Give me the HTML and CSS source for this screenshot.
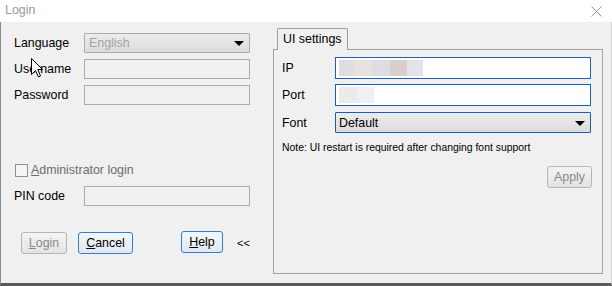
FILE: index.html
```html
<!DOCTYPE html>
<html>
<head>
<meta charset="utf-8">
<link rel="stylesheet" href="styles.css">
</head>
<body>
<div class="window">
  <div class="titlebar">
    <span class="title">Login</span>
    <svg class="close" width="11" height="11" viewBox="0 0 11 11"><path d="M0.5 0.5 L10.5 10.5 M10.5 0.5 L0.5 10.5" stroke="#9a9a9a" stroke-width="1" fill="none"/></svg>
  </div>
  <div class="client">
    <div class="left">
      <div class="row">
        <span class="label">Language</span>
        <div class="combo disabled"><span>English</span><span class="arrow"></span></div>
      </div>
      <div class="row">
        <span class="label">Username</span>
        <div class="input disabled"></div>
      </div>
      <div class="row">
        <span class="label">Password</span>
        <div class="input disabled"></div>
      </div>
      <div class="check-row">
        <span class="checkbox"></span>
        <span class="check-label"><u>A</u>dministrator login</span>
      </div>
      <div class="row">
        <span class="label">PIN code</span>
        <div class="input disabled"></div>
      </div>
      <div class="buttons">
        <button class="btn btn-login" disabled><u>L</u>ogin</button>
        <button class="btn btn-cancel focus"><u>C</u>ancel</button>
        <button class="btn btn-help focus"><u>H</u>elp</button>
        <span class="collapse">&lt;&lt;</span>
      </div>
    </div>
    <div class="right">
      <div class="tab">UI settings</div>
      <div class="panel">
        <div class="prow">
          <span class="plabel">IP</span>
          <div class="input active">
            <span class="blur" style="width:15px;background:#dcdce3"></span><span class="blur" style="width:18px;background:#e8e2dc"></span><span class="blur" style="width:18px;background:#dcdce4"></span><span class="blur" style="width:17px;background:#dccdcd"></span><span class="blur" style="width:16px;background:#e1e5e9"></span>
          </div>
        </div>
        <div class="prow">
          <span class="plabel">Port</span>
          <div class="input active">
            <span class="blur" style="width:18px;background:#ecebe7"></span><span class="blur" style="width:17px;background:#eef0f5"></span>
          </div>
        </div>
        <div class="prow font-row">
          <span class="plabel">Font</span>
          <div class="combo active"><span>Default</span><span class="arrow"></span></div>
        </div>
        <div class="note">Note: UI restart is required after changing font support</div>
        <div class="apply-row">
          <button class="btn btn-apply" disabled>Apply</button>
        </div>
      </div>
    </div>
    <svg class="cursor" width="13" height="20" viewBox="0 0 13 20"><path d="M0.5 0.5 L0.5 16.5 L4.5 12.5 L7.5 19 L9.5 18 L6.8 11.5 L11.5 11.5 Z" fill="#fff" stroke="#000" stroke-width="1" stroke-linejoin="miter"/></svg>
  </div>
</div>
</body>
</html>
```

FILE: styles.css
```css
* { box-sizing: border-box; }
html, body { margin: 0; padding: 0; }
body {
  width: 612px;
  height: 286px;
  overflow: hidden;
  font-family: "Liberation Sans", Arial, sans-serif;
  font-size: 12.4px;
  color: #000;
}
.window {
  width: 612px;
  height: 286px;
  display: flex;
  flex-direction: column;
  background: #f0f0f0;
}
.titlebar {
  height: 22px;
  background: #fff;
  display: flex;
  align-items: center;
  justify-content: space-between;
  padding: 0 10px 2px 5px;
}
.title {
  color: #9a9a9a;
  font-size: 12.4px;
}
.close { margin-top: 2px; }
.client {
  position: relative;
  flex: 1;
  display: flex;
  background: #f0f0f0;
  border-left: 1px solid #8c8c8c;
  border-right: 1px solid #d4d4d4;
  border-bottom: 3px solid #5a5a5a;
}
.left {
  width: 272px;
  padding: 11px 0 0 13px;
  display: flex;
  flex-direction: column;
}
.row {
  display: flex;
  align-items: center;
  height: 20px;
  margin-bottom: 6px;
}
.label {
  width: 70px;
  line-height: 20px;
}
.input {
  width: 166px;
  height: 20px;
  border: 1px solid #ababab;
  background: #f0f0f0;
}
.combo {
  width: 166px;
  height: 20px;
  border: 1px solid #acacac;
  border-radius: 1px;
  background: linear-gradient(#ececec, #dcdcdc);
  display: flex;
  align-items: center;
  justify-content: space-between;
  padding: 0 5px 0 4px;
}
.combo.disabled { color: #a3a3a3; }
.arrow {
  width: 0;
  height: 0;
  border-left: 5px solid transparent;
  border-right: 5px solid transparent;
  border-top: 5px solid #000;
  margin-top: 1px;
}
.check-row {
  display: flex;
  align-items: center;
  height: 14px;
  margin-top: 52px;
  margin-bottom: 9px;
}
.checkbox {
  width: 13px;
  height: 13px;
  border: 1px solid #8f8f8f;
  background: #f4f4f4;
  margin: 0 3px 0 1px;
}
.check-label { color: #6d6d6d; }
.buttons {
  display: flex;
  align-items: center;
  margin-top: 20px;
  padding-left: 7px;
}
.btn {
  font-family: "Liberation Sans", Arial, sans-serif;
  font-size: 12.4px;
  height: 22px;
  padding: 0;
  border: 1px solid #adadad;
  border-radius: 3px;
  background: linear-gradient(#f2f2f2, #e0e0e0);
  color: #000;
}
.btn[disabled] { color: #8a8a8a; border-color: #b5b5b5; background: linear-gradient(#f4f4f4, #e3e3e3); }
.btn.focus { border-color: #2f7fd8; background: linear-gradient(#f3f7fb, #e2e8ef); }
.btn-login { width: 46px; }
.btn-cancel { width: 55px; margin-left: 11px; }
.btn-help { width: 42px; margin-left: 48px; margin-top: -2px; }
.collapse { margin-left: 14px; font-size: 11px; }
.right {
  width: 330px;
  padding-top: 6px;
  display: flex;
  flex-direction: column;
}
.tab {
  position: relative;
  z-index: 1;
  width: 71px;
  height: 22px;
  margin-left: 4px;
  margin-bottom: -1px;
  border: 1px solid #9c9c9c;
  border-bottom: none;
  border-radius: 2px 2px 0 0;
  background: #f0f0f0;
  padding: 3px 0 0 5px;
}
.panel {
  width: 330px;
  height: 225px;
  border: 1px solid #a2a2a2;
  padding: 7px 10px 0 8px;
  display: flex;
  flex-direction: column;
}
.prow {
  display: flex;
  align-items: center;
  margin-bottom: 5px;
}
.plabel { width: 53px; }
.input.active {
  width: 256px;
  height: 22px;
  border: 1px solid #1a5fb4;
  background: #fff;
  display: flex;
  padding: 2px 0 2px 3px;
}
.blur { display: block; height: 100%; }
.font-row { margin-top: 1px; }
.combo.active {
  width: 256px;
  height: 21px;
  border: 1px solid #1a5fb4;
  padding: 0 5px 0 3px;
}
.note {
  font-size: 10.4px;
  margin-top: 4px;
  height: 13px;
}
.apply-row {
  display: flex;
  justify-content: flex-end;
  margin-top: 11px;
}
.btn-apply { width: 45px; }
.cursor {
  position: absolute;
  left: 30px;
  top: 36px;
}
```
